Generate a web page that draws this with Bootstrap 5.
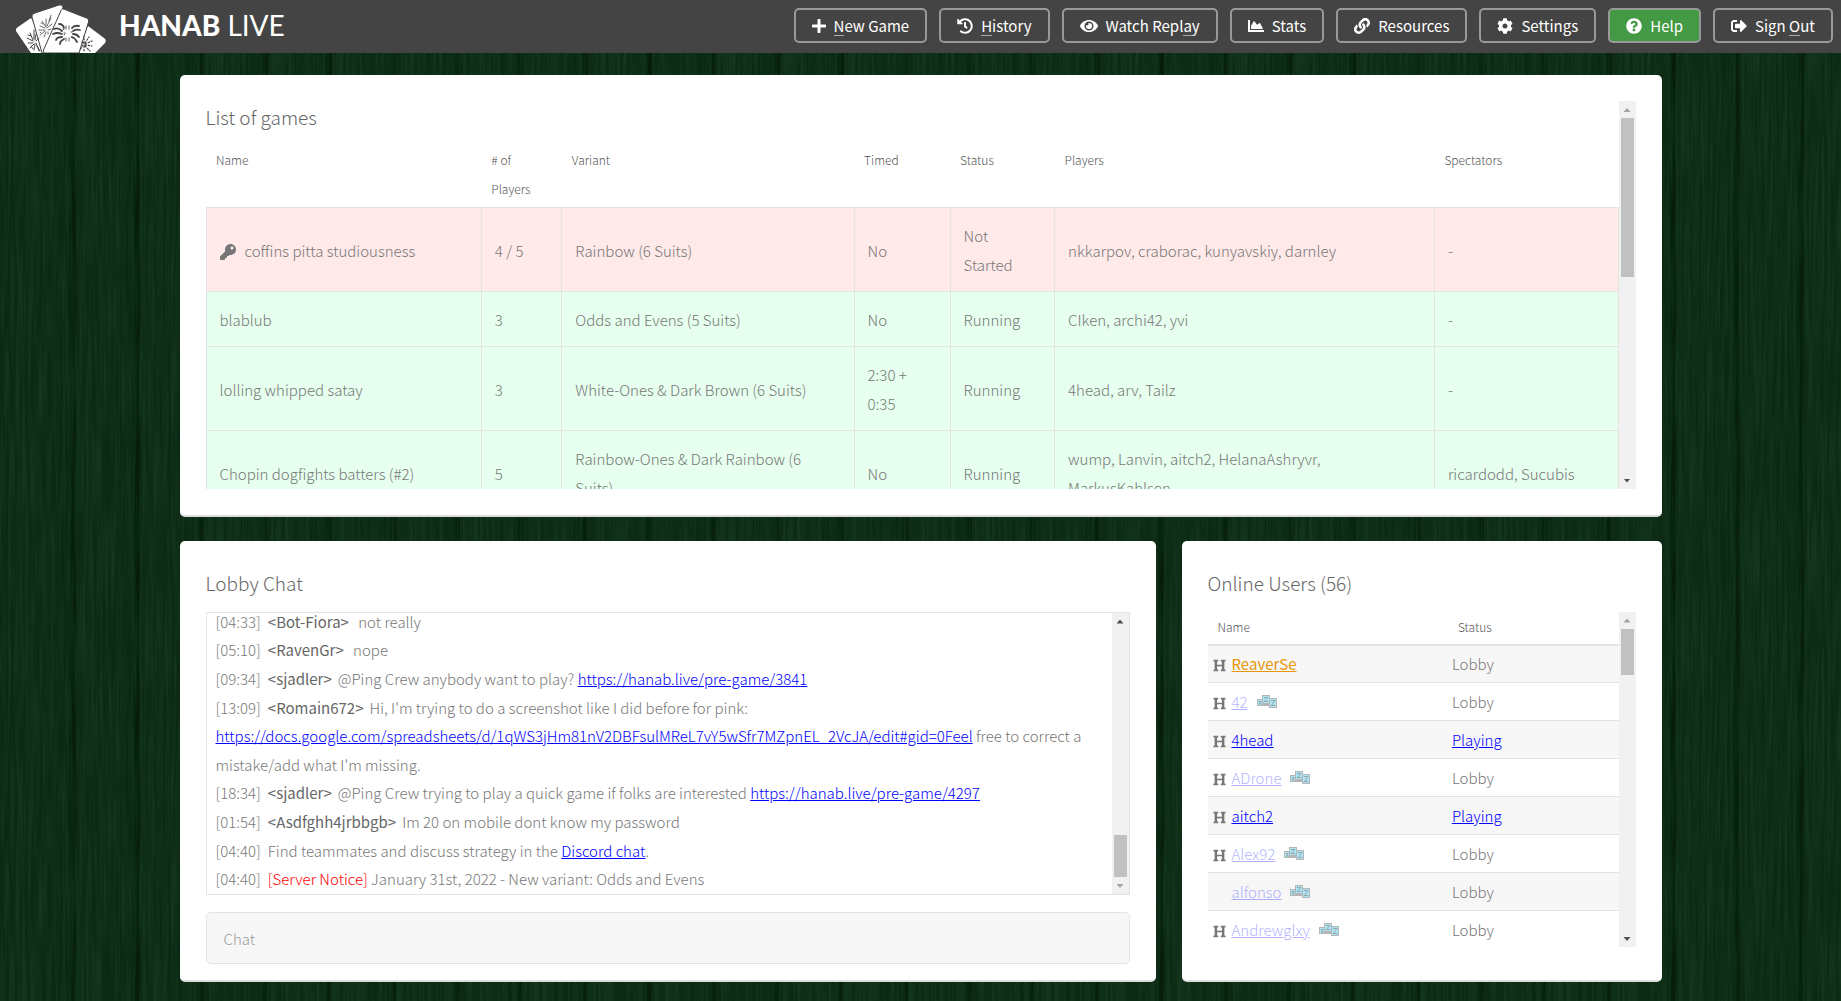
<!DOCTYPE html>
<html lang="en">
<head>
<meta charset="utf-8">
<meta name="viewport" content="width=device-width, initial-scale=1">
<title>Hanab Live</title>
<link href="https://cdn.jsdelivr.net/npm/bootstrap@5.3.0/dist/css/bootstrap.min.css" rel="stylesheet">
<style>
  body {
    font-family: "Noto Sans CJK SC", "Noto Sans", sans-serif;
    font-size: 15px;
    font-weight: 300;
    line-height: 29px;
    color: #777;
    background-color: #0d2a14;
    background-image:
      url("data:image/svg+xml,%3Csvg xmlns='http://www.w3.org/2000/svg' width='512' height='512'%3E%3Cfilter id='g' x='0' y='0' width='100%25' height='100%25'%3E%3CfeTurbulence type='fractalNoise' baseFrequency='0.35 0.012' numOctaves='3' seed='4' stitchTiles='stitch'/%3E%3CfeColorMatrix values='0 0 0 0 0.1 0 0 0 0 0.28 0 0 0 0 0.14 1.4 0 0 0 -0.5'/%3E%3C/filter%3E%3Crect width='512' height='512' filter='url(%23g)' opacity='0.2'/%3E%3C/svg%3E"),
      repeating-linear-gradient(90deg, #0a2812 0, #0c2b14 5px, #0b2a13 30px, #0a2812 57px, #041e0a 61px, #041e0a 63px, #0a2812 64px);
    background-position: 0 0, 12px 0;
  }
  a { color: #00f; text-decoration: underline; }
  .topbar { background: #444; height: 53px; padding-right: 8px; padding-left: 16px; }
  .brand { color: #fff; font: 400 28px/50px Lato, sans-serif; gap: 13px; text-decoration: none; }
  .brand b { font-weight: 900; }
  .brand svg { display: block; }
  .nav-btn {
    --bs-btn-color: #fff; --bs-btn-hover-color: #fff;
    --bs-btn-border-color: #999; --bs-btn-hover-border-color: #bbb;
    --bs-btn-hover-bg: #555;
    --bs-btn-border-width: 2px; --bs-btn-border-radius: 5px;
    --bs-btn-padding-x: 16px; --bs-btn-padding-y: 0;
    --bs-btn-font-size: 15px; --bs-btn-line-height: 29px; --bs-btn-font-weight: 400;
    height: 35px;
  }
  .nav-help { --bs-btn-bg: #449944; }
  .nav-btn svg { height: 16px; fill: currentColor; flex: none; }
  .nav-btn u { text-decoration: none; border-bottom: 1px solid #aaa; display: inline-block; line-height: 19px; }
  .lobby { width: 80.5%; gap: 24px; padding-top: 22px; padding-bottom: 19px; }
  .panel { background: #fff; border-radius: 5px; border-bottom: 2px solid #ddd; padding: 26px 26px 16px; }
  .panel-games { padding-bottom: 26px; }
  .panel-users { padding-bottom: 33px; flex: 0 0 480px; }
  .bottom-row { gap: 26px; }
  .share { flex: 1 1 0; min-height: 0; }
  .panel h2 { font-size: 19px; font-weight: 200; line-height: 32px; margin: 0 0 13px; color: #666; }
  .panel-games h2 { margin-bottom: 12px; }
  .clip { overflow: hidden; min-height: 0; }
  table { width: 100%; table-layout: fixed; }
  th { font-size: 12px; font-weight: 300; color: #555; vertical-align: top; padding: 0 10px 3px; }
  .games th { padding-bottom: 4px; }
  .games td { border: 1px solid #e3e3e3; padding: 13px 16px 12px 13px; }
  .games .open td { background: #ffe9e9; }
  .games .live td { background: #e6ffee; }
  .games svg { width: 16px; fill: #777; margin-right: 9px; }
  .users thead th { border-bottom: 2px solid #e3e3e3; }
  .users td { height: 38px; padding: 0 5px; border-bottom: 1px solid #e3e3e3; }
  .users td:last-child { padding-left: 4px; }
  .users tbody tr:nth-child(odd) { background: #f7f7f7; }
  .flag { display: inline-block; width: 19px; }
  .flag svg { width: 13px; height: 13px; fill: #777; vertical-align: -2px; display: inline-block; }
  .away { opacity: .3; }
  .host { color: #e8960a; font-weight: 400; }
  .zzz { width: 20px; height: 14px; margin-left: 9px; vertical-align: -1px; }
  .bar { width: 17px; flex: none; background: #f1f1f1; }
  .bar i { display: block; height: 17px; flex: none; padding-top: 7px; }
  .bar i::before { content: ""; display: block; margin: 0 auto; width: 7px; height: 4px; background: #505050; clip-path: polygon(50% 0, 100% 100%, 0 100%); }
  .bar i.down::before { clip-path: polygon(0 0, 100% 0, 50% 100%); }
  .bar i.off::before { background: #a3a3a3; }
  .bar b { width: 13px; background: #c1c1c1; align-self: center; }
  .chat-box { border: 1px solid #e3e3e3; }
  .chat-log { padding: 0 9px; line-height: 1.91; }
  .chat-log time { margin-right: 7px; }
  .chat-log strong { font-weight: 400; color: #666; margin-right: 6px; }
  .notice { color: #f00; }
  .chat-in { height: 52px; margin-top: 17px; padding: 0 17px; background: #f7f7f7; border: 1px solid #e3e3e3; border-radius: 5px; font-size: 15px; font-weight: 300; }
  .chat-in::placeholder { color: #999; opacity: 1; }
</style>
</head>
<body>
<svg width="0" height="0" class="d-none" aria-hidden="true">
  <symbol id="i-h" viewBox="0 0 512 512"><path d="M448 96v320h32a16 16 0 0 1 16 16v32a16 16 0 0 1-16 16H320a16 16 0 0 1-16-16v-32a16 16 0 0 1 16-16h32V288H160v128h32a16 16 0 0 1 16 16v32a16 16 0 0 1-16 16H32a16 16 0 0 1-16-16v-32a16 16 0 0 1 16-16h32V96H32a16 16 0 0 1-16-16V48a16 16 0 0 1 16-16h160a16 16 0 0 1 16 16v32a16 16 0 0 1-16 16h-32v128h192V96h-32a16 16 0 0 1-16-16V48a16 16 0 0 1 16-16h160a16 16 0 0 1 16 16v32a16 16 0 0 1-16 16z"/></symbol>
  <symbol id="i-z" viewBox="0 0 20 14">
    <path fill="#b5b5b5" d="M0 4h5V0h8v3h7v10h-8v-2H0z"/>
    <path fill="#a9e6f7" d="M1 5h4v5H1zM6 1h6v7H6zM13 4h6v8h-6z"/>
    <path fill="none" stroke="#9aa3a6" d="M2 6.500h2.200L2 9h2.500M7 2.500h3.800L7.200 6.500h4M14 5.500h4l-3.800 5h4"/>
  </symbol>
</svg>
<div class="vh-100 d-flex flex-column">
  <header class="topbar d-flex align-items-start justify-content-between flex-shrink-0">
    <a href="#" class="brand d-flex align-items-start">
      <svg width="90" height="53" viewBox="16 0 90 53" aria-hidden="true">
        <g fill="#fff" stroke="#444" stroke-width="1">
          <path d="M18 27 31 18 50 53H31L16 31q-1-2 2-4z" stroke="none"/>
          <path d="M35 13 59 5q3-1 4 2L52 53H42L32 17q-1-3 3-4z"/>
          <path d="M88 26 104 38q3 2 1 5L95 53H77z" stroke="none"/>
          <path d="M65 9.500q-3-2-4 1L43.500 50q-.5 2 1 3H79L88.500 22q1-3-2-4z"/>
        </g>
        <g fill="none" stroke="#444" stroke-linecap="round">
          <path stroke-width="1.800" d="M62 31q-4-4-8-2M62 34q-5-2-9 0M64 28q-1-4-5-4M72 28q2-3 7-2M73 31q3-2 7-1M73 34q4 0 6 3M62 37q-5 0-6 3M64 39q-4 2-4 5M72 37q3 1 5 5"/>
          <path stroke-width=".9" d="M66 29v-3M69 29v-3M66 38v3M69 38v3M64 30l-1-1M71 37l1 1M64 33h1M71 32h1M64 35l1-1"/>
          <path stroke-width=".8" d="M46 27l-4-6M46 26v-7M47 26l4-8M45 28l-5-2M45 30l-6 0M45 31l-5 4M46 32l-2 5M47 28l5-4M48 30l3-1M43 24l-2-1M41 32l-1 1M49 21l2-6M48 32v2"/>
          <path stroke-width="1" d="M33 40l-3-7M34 39v-9M35 40l1-6M33 41l-6-3M33 43l-5 0M34 44l-4 4M35 44l-1 6M36 43l3 8M36 41l3-3M31 36l-3-1M31 46l2 3M37 46l3 5"/>
          <path stroke-width="1.200" stroke-dasharray="1.500 1.800" d="M84 43v-7M85 43l4-6M85 44l7-3M85 45l7 1M85 46l5 5M84 46v5M83 45l-3 5M83 43l-2-2"/>
        </g>
      </svg>
      <span><b>HANAB</b> LIVE</span>
    </a>
    <nav class="d-flex pt-2" style="gap:12px">
      <button class="btn nav-btn d-flex align-items-center gap-2"><svg viewBox="0 0 448 512"><path d="M416 208H272V64c0-17.670-14.330-32-32-32h-32c-17.670 0-32 14.330-32 32v144H32c-17.670 0-32 14.330-32 32v32c0 17.670 14.330 32 32 32h144v144c0 17.670 14.330 32 32 32h32c17.670 0 32-14.330 32-32V304h144c17.670 0 32-14.330 32-32v-32c0-17.670-14.330-32-32-32z"/></svg><span><u>N</u>ew Game</span></button>
      <button class="btn nav-btn d-flex align-items-center gap-2"><svg viewBox="0 0 512 512"><path d="M504 255.531c.253 136.640-111.180 248.372-247.820 248.468-59.015.042-113.223-20.530-155.822-54.911-11.077-8.940-11.905-25.541-1.839-35.607l11.267-11.267c8.609-8.609 22.353-9.551 31.891-1.984C173.062 425.135 212.781 440 256 440c101.705 0 184-82.311 184-184 0-101.705-82.311-184-184-184-48.814 0-93.149 18.969-126.068 49.932l50.754 50.754c10.080 10.080 2.941 27.314-11.313 27.314H24c-8.837 0-16-7.163-16-16V38.627c0-14.254 17.234-21.393 27.314-11.314l49.372 49.372C129.209 34.136 189.552 8 256 8c136.810 0 247.747 110.780 248 247.531zm-180.912 78.784l9.823-12.630c8.138-10.463 6.253-25.542-4.210-33.679L288 256.349V152c0-13.255-10.745-24-24-24h-16c-13.255 0-24 10.745-24 24v135.651l65.409 50.874c10.463 8.137 25.541 6.253 33.679-4.210z"/></svg><span><u>H</u>istory</span></button>
      <button class="btn nav-btn d-flex align-items-center gap-2"><svg viewBox="0 0 576 512"><path d="M572.520 241.400C518.290 135.590 410.930 64 288 64S57.680 135.640 3.480 241.410a32.350 32.350 0 0 0 0 29.190C57.710 376.410 165.070 448 288 448s230.320-71.640 284.520-177.410a32.350 32.350 0 0 0 0-29.190zM288 400a144 144 0 1 1 144-144 143.930 143.930 0 0 1-144 144zm0-240a95.310 95.310 0 0 0-25.310 3.790 47.850 47.850 0 0 1-66.900 66.900A95.780 95.780 0 1 0 288 160z"/></svg><span>Watch Repl<u>a</u>y</span></button>
      <button class="btn nav-btn d-flex align-items-center gap-2"><svg viewBox="0 0 512 512"><path d="M500 384c6.600 0 12 5.400 12 12v40c0 6.600-5.400 12-12 12H12c-6.600 0-12-5.400-12-12V76c0-6.600 5.400-12 12-12h40c6.600 0 12 5.400 12 12v308h436zM372.700 159.500L288 216l-85.300-113.700c-5.100-6.800-15.500-6.300-19.900 1L96 248v104h384l-89.900-187.800c-3.200-6.500-11.400-8.700-17.400-4.700z"/></svg><span>Stats</span></button>
      <button class="btn nav-btn d-flex align-items-center gap-2"><svg viewBox="0 0 512 512"><path d="M326.612 185.391c59.747 59.809 58.927 155.698.36 214.590-.11.120-.24.250-.36.370l-67.200 67.200c-59.270 59.270-155.699 59.262-214.960 0-59.270-59.260-59.270-155.700 0-214.960l37.106-37.106c9.840-9.840 26.786-3.300 27.294 10.606.648 17.722 3.826 35.527 9.690 52.721 1.986 5.822.567 12.262-3.783 16.612l-13.087 13.087c-28.026 28.026-28.905 73.660-1.155 101.960 28.024 28.579 74.086 28.749 102.325.510l67.200-67.190c28.191-28.191 28.073-73.757 0-101.830-3.701-3.694-7.429-6.564-10.341-8.569a16.037 16.037 0 0 1-6.947-12.606c-.396-10.567 3.348-21.456 11.698-29.806l21.054-21.055c5.521-5.521 14.182-6.199 20.584-1.731a152.482 152.482 0 0 1 20.522 17.197zM467.547 44.449c-59.261-59.262-155.690-59.270-214.960 0l-67.200 67.200c-.12.120-.25.250-.36.370-58.566 58.892-59.387 154.781.36 214.590a152.454 152.454 0 0 0 20.521 17.196c6.402 4.468 15.064 3.789 20.584-1.731l21.054-21.055c8.350-8.350 12.094-19.239 11.698-29.806a16.037 16.037 0 0 0-6.947-12.606c-2.912-2.005-6.640-4.875-10.341-8.569-28.073-28.073-28.191-73.639 0-101.830l67.200-67.190c28.239-28.239 74.300-28.069 102.325.510 27.750 28.300 26.872 73.934-1.155 101.960l-13.087 13.087c-4.350 4.350-5.769 10.790-3.783 16.612 5.864 17.194 9.042 34.999 9.690 52.721.509 13.906 17.454 20.446 27.294 10.606l37.106-37.106c59.271-59.259 59.271-155.699.001-214.959z"/></svg><span>Resources</span></button>
      <button class="btn nav-btn d-flex align-items-center gap-2"><svg viewBox="0 0 512 512"><path d="M487.400 315.700l-42.600-24.600c4.300-23.200 4.300-47 0-70.200l42.600-24.600c4.900-2.800 7.100-8.600 5.500-14-11.100-35.600-30-67.800-54.700-94.600-3.800-4.100-10-5.100-14.800-2.300L380.800 110c-17.900-15.400-38.500-27.300-60.800-35.100V25.800c0-5.600-3.900-10.500-9.400-11.700-36.700-8.200-74.300-7.800-109.200 0-5.500 1.200-9.400 6.100-9.400 11.700V75c-22.200 7.900-42.800 19.800-60.800 35.100L88.700 85.500c-4.900-2.800-11-1.900-14.800 2.300-24.700 26.700-43.600 58.900-54.700 94.600-1.700 5.400.6 11.200 5.500 14L67.300 221c-4.300 23.200-4.300 47 0 70.200l-42.600 24.600c-4.900 2.800-7.100 8.600-5.500 14 11.100 35.600 30 67.800 54.700 94.600 3.800 4.100 10 5.100 14.800 2.300l42.600-24.600c17.900 15.400 38.500 27.300 60.800 35.100v49.200c0 5.600 3.900 10.500 9.400 11.700 36.700 8.200 74.300 7.800 109.200 0 5.500-1.200 9.400-6.100 9.400-11.700v-49.200c22.200-7.900 42.800-19.800 60.800-35.100l42.600 24.600c4.900 2.800 11 1.900 14.800-2.300 24.700-26.700 43.600-58.900 54.700-94.600 1.500-5.500-.7-11.300-5.600-14.100zM256 336c-44.100 0-80-35.900-80-80s35.900-80 80-80 80 35.900 80 80-35.900 80-80 80z"/></svg><span>Settings</span></button>
      <button class="btn nav-btn nav-help d-flex align-items-center gap-2"><svg viewBox="0 0 512 512"><path d="M504 256c0 136.997-111.043 248-248 248S8 392.997 8 256C8 119.083 119.043 8 256 8s248 111.083 248 248zM262.655 90c-54.497 0-89.255 22.957-116.549 63.758-3.536 5.286-2.353 12.415 2.715 16.258l34.699 26.310c5.205 3.947 12.621 3.008 16.665-2.122 17.864-22.658 30.113-35.797 57.303-35.797 20.429 0 45.698 13.148 45.698 32.958 0 14.976-12.363 22.667-32.534 33.976C247.128 238.528 216 254.941 216 296v4c0 6.627 5.373 12 12 12h56c6.627 0 12-5.373 12-12v-1.333c0-28.462 83.186-29.647 83.186-106.667 0-58.002-60.165-102-116.531-102zM256 338c-25.365 0-46 20.635-46 46 0 25.364 20.635 46 46 46s46-20.636 46-46c0-25.365-20.635-46-46-46z"/></svg><span>Help</span></button>
      <button class="btn nav-btn d-flex align-items-center gap-2"><svg viewBox="0 0 512 512"><path d="M497 273L329 441c-15 15-41 4.500-41-17v-96H152c-13.300 0-24-10.700-24-24v-96c0-13.300 10.700-24 24-24h136V88c0-21.400 25.900-32 41-17l168 168c9.300 9.400 9.300 24.600 0 34zM192 436v-40c0-6.600-5.400-12-12-12H96c-17.700 0-32-14.300-32-32V160c0-17.700 14.300-32 32-32h84c6.600 0 12-5.400 12-12V76c0-6.600-5.400-12-12-12H96c-53 0-96 43-96 96v192c0 53 43 96 96 96h84c6.600 0 12-5.400 12-12z"/></svg><span>Sign <u>O</u>ut</span></button>
    </nav>
  </header>

  <main class="lobby mx-auto d-flex flex-column flex-grow-1 clip">
    <div class="share d-flex">
    <section class="panel panel-games flex-grow-1 d-flex">
      <div class="clip flex-grow-1">
        <h2>List of games</h2>
        <table class="games">
          <colgroup><col style="width:19.5%"><col style="width:5.7%"><col style="width:20.7%"><col style="width:6.8%"><col style="width:7.4%"><col style="width:26.9%"><col></colgroup>
          <thead><tr><th>Name</th><th># of Players</th><th>Variant</th><th>Timed</th><th>Status</th><th>Players</th><th>Spectators</th></tr></thead>
          <tbody>
            <tr class="open"><td><svg viewBox="0 0 512 512" aria-label="Password protected"><path d="M512 176.001C512 273.203 433.202 352 336 352c-11.220 0-22.190-1.062-32.827-3.069l-24.012 27.014A23.999 23.999 0 0 1 261.223 384H224v40c0 13.255-10.745 24-24 24h-40v40c0 13.255-10.745 24-24 24H24c-13.255 0-24-10.745-24-24v-78.059c0-6.365 2.529-12.470 7.029-16.971l161.802-161.802C163.108 213.814 160 195.271 160 176 160 78.798 238.797.001 335.999 0 433.488-.001 512 78.511 512 176.001zM336 128c0 26.510 21.490 48 48 48s48-21.490 48-48-21.490-48-48-48-48 21.490-48 48z"/></svg>coffins pitta studiousness</td><td>4 / 5</td><td>Rainbow (6 Suits)</td><td>No</td><td>Not Started</td><td>nkkarpov, craborac, kunyavskiy, darnley</td><td>-</td></tr>
            <tr class="live"><td>blablub</td><td>3</td><td>Odds and Evens (5 Suits)</td><td>No</td><td>Running</td><td>CIken, archi42, yvi</td><td>-</td></tr>
            <tr class="live"><td>lolling whipped satay</td><td>3</td><td>White-Ones &amp; Dark Brown (6 Suits)</td><td>2:30 + 0:35</td><td>Running</td><td>4head, arv, Tailz</td><td>-</td></tr>
            <tr class="live"><td>Chopin dogfights batters (#2)</td><td>5</td><td>Rainbow-Ones &amp; Dark Rainbow (6 Suits)</td><td>No</td><td>Running</td><td>wump, Lanvin, aitch2, HelanaAshryvr, MarkusKahlsen</td><td>ricardodd, Sucubis</td></tr>
          </tbody>
        </table>
      </div>
      <div class="bar d-flex flex-column" aria-hidden="true"><i class="off"></i><b style="height:41%"></b><i class="down mt-auto"></i></div>
    </section>
    </div>

    <div class="bottom-row share d-flex">
      <section class="panel flex-grow-1 d-flex flex-column">
        <h2>Lobby Chat</h2>
        <div class="chat-box d-flex share">
          <div class="chat-log clip flex-grow-1 d-flex flex-column justify-content-end">
            <div><time>[04:33]</time><strong>&lt;Bot-Fiora&gt;</strong> not really</div>
            <div><time>[05:10]</time><strong>&lt;RavenGr&gt;</strong> nope</div>
            <div><time>[09:34]</time><strong>&lt;sjadler&gt;</strong>@Ping Crew anybody want to play? <a href="#">https://hanab.live/pre-game/3841</a></div>
            <div><time>[13:09]</time><strong>&lt;Romain672&gt;</strong>Hi, I'm trying to do a screenshot like I did before for pink: <a href="#">https://docs.google.com/spreadsheets/d/1qWS3jHm81nV2DBFsulMReL7vY5wSfr7MZpnEL_2VcJA/edit#gid=0Feel</a> free to correct a mistake/add what I'm missing.</div>
            <div><time>[18:34]</time><strong>&lt;sjadler&gt;</strong>@Ping Crew trying to play a quick game if folks are interested <a href="#">https://hanab.live/pre-game/4297</a></div>
            <div><time>[01:54]</time><strong>&lt;Asdfghh4jrbbgb&gt;</strong>Im 20 on mobile dont know my password</div>
            <div><time>[04:40]</time>Find teammates and discuss strategy in the <a href="#">Discord chat</a>.</div>
            <div><time>[04:40]</time><span class="notice">[Server Notice]</span> January 31st, 2022 - New variant: Odds and Evens</div>
          </div>
          <div class="bar d-flex flex-column" aria-hidden="true"><i></i><b class="mt-auto" style="height:15%"></b><i class="down off"></i></div>
        </div>
        <input type="text" class="chat-in w-100 flex-shrink-0" placeholder="Chat" aria-label="Chat">
      </section>

      <section class="panel panel-users d-flex flex-column">
        <h2>Online Users (56)</h2>
        <div class="d-flex share">
          <div class="clip flex-grow-1">
            <table class="users">
              <colgroup><col style="width:58.500%"><col></colgroup>
              <thead><tr><th>Name</th><th>Status</th></tr></thead>
              <tbody>
                <tr><td><span class="flag"><svg><use href="#i-h"/></svg></span><a href="#" class="host">ReaverSe</a></td><td>Lobby</td></tr>
                <tr><td><span class="flag"><svg><use href="#i-h"/></svg></span><a href="#" class="away">42</a><svg class="zzz"><use href="#i-z"/></svg></td><td>Lobby</td></tr>
                <tr><td><span class="flag"><svg><use href="#i-h"/></svg></span><a href="#">4head</a></td><td><a href="#">Playing</a></td></tr>
                <tr><td><span class="flag"><svg><use href="#i-h"/></svg></span><a href="#" class="away">ADrone</a><svg class="zzz"><use href="#i-z"/></svg></td><td>Lobby</td></tr>
                <tr><td><span class="flag"><svg><use href="#i-h"/></svg></span><a href="#">aitch2</a></td><td><a href="#">Playing</a></td></tr>
                <tr><td><span class="flag"><svg><use href="#i-h"/></svg></span><a href="#" class="away">Alex92</a><svg class="zzz"><use href="#i-z"/></svg></td><td>Lobby</td></tr>
                <tr><td><span class="flag"></span><a href="#" class="away">alfonso</a><svg class="zzz"><use href="#i-z"/></svg></td><td>Lobby</td></tr>
                <tr><td><span class="flag"><svg><use href="#i-h"/></svg></span><a href="#" class="away">Andrewglxy</a><svg class="zzz"><use href="#i-z"/></svg></td><td>Lobby</td></tr>
              </tbody>
            </table>
          </div>
          <div class="bar d-flex flex-column" aria-hidden="true"><i class="off"></i><b style="height:14%"></b><i class="down mt-auto"></i></div>
        </div>
      </section>
    </div>
  </main>
</div>
<script src="https://cdn.jsdelivr.net/npm/bootstrap@5.3.0/dist/js/bootstrap.bundle.min.js"></script>
</body>
</html>
